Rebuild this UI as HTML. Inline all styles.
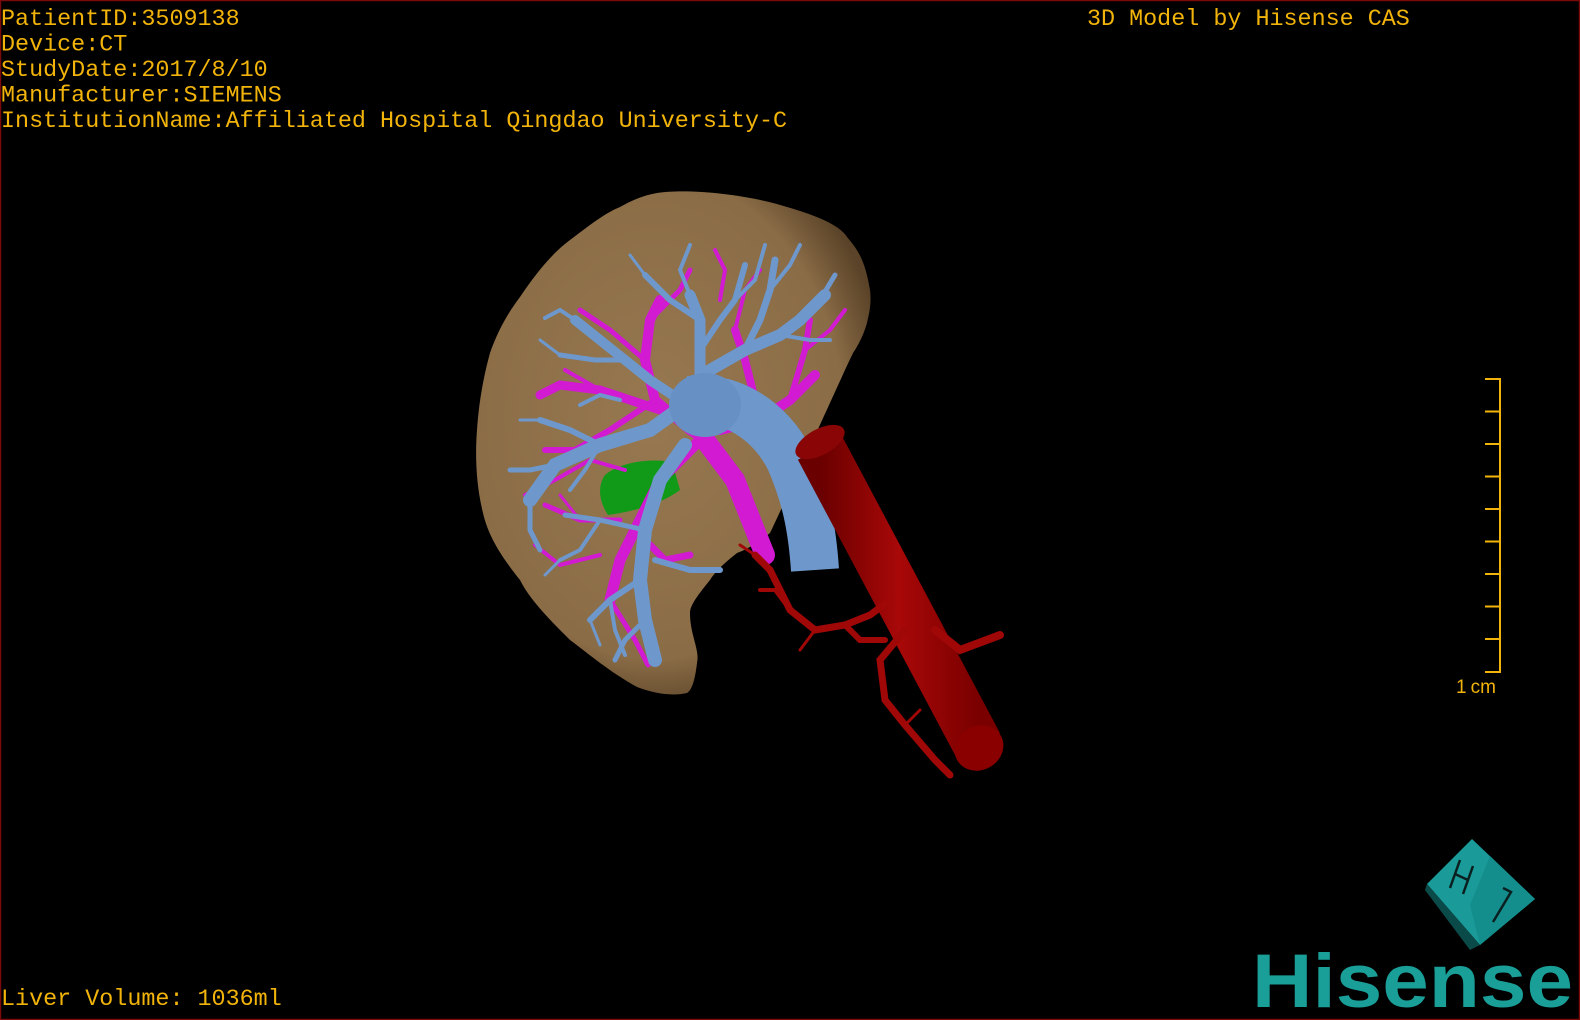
<!DOCTYPE html>
<html><head><meta charset="utf-8"><style>
html,body{margin:0;padding:0;background:#000;}
body{width:1580px;height:1020px;overflow:hidden;}
svg{display:block}
.t{font-family:"Liberation Mono",monospace;font-size:23.4px;fill:#f2b40a;}
</style></head><body>
<svg width="1580" height="1020" viewBox="0 0 1580 1020" xmlns="http://www.w3.org/2000/svg">
<defs>
<radialGradient id="lv" cx="0.45" cy="0.45" r="0.6">
<stop offset="0" stop-color="#977850"/><stop offset="0.8" stop-color="#8a6c46"/><stop offset="1" stop-color="#5a4328"/>
</radialGradient>
<linearGradient id="ao" x1="0" y1="0" x2="1" y2="0">
<stop offset="0" stop-color="#6a0000"/><stop offset="0.5" stop-color="#a80808"/><stop offset="1" stop-color="#7a0000"/>
</linearGradient>
</defs>
<rect x="0.5" y="0.5" width="1579" height="1019" fill="#000" stroke="#7a0a0a" stroke-width="1.5"/>
<text class="t" x="1" y="25">PatientID:3509138</text>
<text class="t" x="1" y="50.5">Device:CT</text>
<text class="t" x="1" y="76">StudyDate:2017/8/10</text>
<text class="t" x="1" y="101.5">Manufacturer:SIEMENS</text>
<text class="t" x="1" y="127">InstitutionName:Affiliated Hospital Qingdao University-C</text>
<text class="t" x="1087" y="25">3D Model by Hisense CAS</text>
<text class="t" x="1" y="1005">Liver Volume: 1036ml</text>

<g stroke="#f2b40a" stroke-width="2" fill="none">
<path d="M1485 379H1500V672H1485"/>
<path d="M1485 411.5H1500M1485 444H1500M1485 476.5H1500M1485 509H1500M1485 541.5H1500M1485 574H1500M1485 606.5H1500M1485 639H1500"/>
</g>
<text x="1456" y="693" style="font-family:'Liberation Sans',sans-serif;font-size:19px;fill:#f2b40a">1<tspan dx="4">cm</tspan></text>

<path d="M657 193 C690 188 750 195 787 207 C815 215 840 225 847 237 C858 250 865 260 870 290 C872 305 868 318 867 323 C862 340 855 350 853 353 C840 380 800 470 770 533 C755 545 745 550 737 553 C722 565 715 572 710 580 C698 595 690 605 690 613 C690 635 700 650 697 663 C695 680 692 690 687 693 C670 697 650 692 637 687 C610 672 590 655 570 640 C550 620 530 600 520 580 C500 555 488 535 483 513 C476 485 475 455 477 430 C479 400 484 375 490 353 C498 330 508 313 520 297 C535 275 550 255 570 240 C590 225 605 213 620 207 C632 200 645 195 657 193Z" fill="url(#lv)"/>

<path d="M605 475 C620 462 650 458 672 462 L680 490 C660 505 630 512 608 515 C598 500 598 485 605 475Z" fill="#109a18"/>

<g stroke="#d21ad2" fill="none" stroke-linecap="round">
<path d="M765 555 L735 480 L705 440" stroke-width="20"/>
<path d="M705 440 L690 430 L655 400 L645 360 L650 320 L660 300" stroke-width="10"/>
<path d="M700 440 L660 480 L635 530 L620 560 L610 600" stroke-width="11"/>
<path d="M660 410 L600 390 L560 385 L540 395" stroke-width="9"/>
<path d="M720 430 L760 420 L790 400 L815 375" stroke-width="10"/>
<path d="M760 420 L745 360 L735 330" stroke-width="8"/>
<path d="M790 400 L805 350 L810 320" stroke-width="6"/>
<path d="M655 400 L610 430 L575 450 L545 450" stroke-width="6"/>
<path d="M620 520 L580 520 L545 505" stroke-width="5"/>
<path d="M635 530 L665 560 L690 555" stroke-width="7"/>
<path d="M650 320 L680 290 L690 270" stroke-width="5"/>
<path d="M645 360 L610 330 L580 310" stroke-width="5"/>
<path d="M600 390 L565 370" stroke-width="4"/>
<path d="M610 600 L635 640 L648 665" stroke-width="5"/>
<path d="M625 470 L590 460 L555 480 L525 495" stroke-width="4"/>
<path d="M735 330 L745 290 L760 270" stroke-width="4"/>
<path d="M805 350 L830 330 L845 310" stroke-width="4"/>
<path d="M720 300 L725 270 L715 250" stroke-width="4"/>
<path d="M600 555 L560 565 L535 545" stroke-width="4"/>
<path d="M580 520 L560 495" stroke-width="3"/>
</g>

<g stroke="#6e98cc" fill="none" stroke-linecap="round">
<path d="M690 400 C730 395 770 420 790 460 C805 495 812 525 815 570" stroke-width="48" stroke-linecap="butt"/>
<path d="M685 405 L650 430 L600 445 L555 465 L530 500" stroke-width="14"/>
<path d="M685 445 L660 480 L645 530 L640 580 L645 620 L655 660" stroke-width="14"/>
<path d="M680 400 L650 380 L625 360 L600 340 L575 320" stroke-width="10"/>
<path d="M700 380 L700 350 L700 320 L690 295" stroke-width="11"/>
<path d="M710 370 L745 350 L780 335 L800 320 L825 295" stroke-width="12"/>
<path d="M745 350 L760 320 L770 290 L775 260" stroke-width="7"/>
<path d="M700 350 L720 320 L735 300 L745 265" stroke-width="6"/>
<path d="M700 320 L670 300 L645 275" stroke-width="6"/>
<path d="M625 360 L595 360 L560 355" stroke-width="5"/>
<path d="M600 445 L570 430 L540 420" stroke-width="6"/>
<path d="M555 465 L530 470 L510 470" stroke-width="5"/>
<path d="M530 500 L530 530 L540 550" stroke-width="5"/>
<path d="M640 580 L610 600 L590 620" stroke-width="6"/>
<path d="M645 620 L625 640 L615 660" stroke-width="5"/>
<path d="M655 560 L690 570 L720 570" stroke-width="6"/>
<path d="M645 530 L600 520 L565 515" stroke-width="5"/>
<path d="M600 520 L580 550 L560 560" stroke-width="4"/>
<path d="M575 320 L560 310 L545 318" stroke-width="4"/>
<path d="M800 320 L820 300 L835 275" stroke-width="5"/>
<path d="M780 335 L810 340 L830 340" stroke-width="4"/>
<path d="M770 290 L790 265 L800 245" stroke-width="4"/>
<path d="M690 295 L680 270 L690 245" stroke-width="4"/>
<path d="M735 300 L755 280 L765 245" stroke-width="4"/>
<path d="M645 275 L630 255" stroke-width="3"/>
<path d="M620 400 L600 395 L580 405" stroke-width="4"/>
<path d="M600 445 L585 470 L570 490" stroke-width="4"/>
<path d="M610 600 L615 630 L625 655" stroke-width="4"/>
<path d="M560 355 L540 340" stroke-width="3"/>
<path d="M540 420 L520 420" stroke-width="3"/>
<path d="M590 620 L600 645" stroke-width="3"/>
<path d="M560 560 L545 575" stroke-width="3"/>
</g>
<ellipse cx="705" cy="405" rx="36" ry="32" fill="#6790c4"/>

<g fill="none" stroke-linecap="round">
<path d="M820 448 L978 745" stroke="url(#ao)" stroke-width="50" stroke-linecap="butt"/>
<ellipse cx="820" cy="442" rx="27" ry="13" fill="#8a0505" transform="rotate(-28 820 442)"/>
<ellipse cx="979" cy="748" rx="25" ry="22" fill="#8a0000" transform="rotate(-28 979 748)"/>
<g stroke="#a00808">
<path d="M890 600 L870 615 L845 625 L815 630 L790 610 L770 570 L755 555" stroke-width="7"/>
<path d="M845 625 L860 640 L885 640" stroke-width="6"/>
<path d="M815 630 L800 650" stroke-width="3"/>
<path d="M905 630 L880 660 L885 700 L905 725 L935 760 L950 775" stroke-width="7"/>
<path d="M905 725 L920 710" stroke-width="3"/>
<path d="M935 630 L960 650 L1000 635" stroke-width="8"/>
<path d="M790 610 L775 590 L760 590" stroke-width="4"/>
<path d="M755 555 L740 545" stroke-width="3"/>
</g>
</g>

<polygon points="1472,839 1535,899 1480,945 1427,884" fill="#1a9a98"/>
<polygon points="1490,856 1535,899 1480,945 1470,905" fill="#148e8c"/>
<polygon points="1427,884 1480,945 1470,950 1425,890" fill="#0a4a48"/>
<g stroke="#0a2020" stroke-width="2.5" fill="none">
<path d="M1460 860 L1450 888 M1473 866 L1463 894 M1455 874 L1468 880"/>
<path d="M1503 888 L1511 892 L1493 922"/>
</g>
<text x="1252" y="1007" textLength="321" lengthAdjust="spacingAndGlyphs" style="font-family:'Liberation Sans',sans-serif;font-weight:bold;font-size:76px;fill:#1a9e98">Hisense</text>
</svg>
</body></html>
